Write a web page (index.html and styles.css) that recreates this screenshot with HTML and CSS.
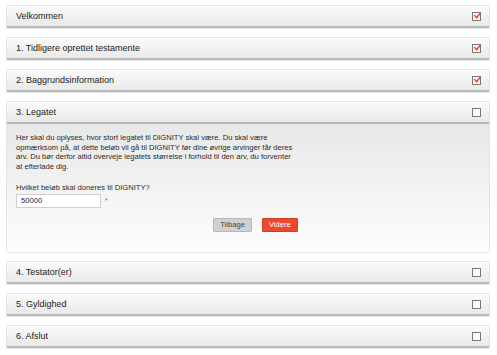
FILE: index.html
```html
<!DOCTYPE html>
<html lang="da">
<head>
<meta charset="utf-8">
<link rel="stylesheet" href="styles.css">
</head>
<body>
<div class="steps">
  <div class="panel">
    <div class="head"><span>Velkommen</span><span class="cb done"><svg viewBox="0 0 9 9"><path d="M1.5 3.5 L4 6.5 L8.5 0.8" /></svg></span></div>
  </div>
  <div class="panel">
    <div class="head"><span>1. Tidligere oprettet testamente</span><span class="cb done"><svg viewBox="0 0 9 9"><path d="M1.5 3.5 L4 6.5 L8.5 0.8" /></svg></span></div>
  </div>
  <div class="panel">
    <div class="head"><span>2. Baggrundsinformation</span><span class="cb done"><svg viewBox="0 0 9 9"><path d="M1.5 3.5 L4 6.5 L8.5 0.8" /></svg></span></div>
  </div>
  <div class="panel open">
    <div class="head"><span>3. Legatet</span><span class="cb"></span></div>
    <div class="body">
      <p class="intro">Her skal du oplyses, hvor stort legatet til DIGNITY skal være. Du skal være opmærksom på, at dette beløb vil gå til DIGNITY før dine øvrige arvinger får deres arv. Du bør derfor altid overveje legatets størrelse i forhold til den arv, du forventer at efterlade dig.</p>
      <label class="q">Hvilket beløb skal doneres til DIGNITY?</label>
      <div class="field"><input type="text" value="50000"><span class="req">*</span></div>
      <div class="actions"><button class="btn back">Tilbage</button><button class="btn next">Videre</button></div>
    </div>
  </div>
  <div class="panel">
    <div class="head"><span>4. Testator(er)</span><span class="cb"></span></div>
  </div>
  <div class="panel">
    <div class="head"><span>5. Gyldighed</span><span class="cb"></span></div>
  </div>
  <div class="panel">
    <div class="head"><span>6. Afslut</span><span class="cb"></span></div>
  </div>
</div>
</body>
</html>
```
FILE: styles.css
```css
html, body { margin: 0; padding: 0; background: #fff; }
body { font-family: "Liberation Sans", Arial, sans-serif; color: #333; }
.steps { padding: 5px 7px 0 6px; display: flex; flex-direction: column; gap: 8px; }
.panel { border: 1px solid #e4e4e4; border-radius: 2px; background: #fff; }
.head {
  height: 20px;
  display: flex; align-items: center; justify-content: space-between;
  padding: 0 8px 0 9px;
  font-size: 9px; color: #222;
  background: linear-gradient(#fbfbfb, #e9e9e9);
  border-bottom: 2px solid #b9b9b9;
}
.cb {
  width: 7px; height: 7px; border: 1px solid #777; background: #fafafa;
  position: relative; margin-top: 1px;
}
.cb svg { position: absolute; left: 0; top: -1px; width: 8px; height: 8px; overflow: visible; }
.cb svg path { fill: none; stroke: #e8412b; stroke-width: 1.6; }
.body {
  padding: 9px 9px 20px 9px;
  background: linear-gradient(#e8e8e8, #fdfdfd);
  font-size: 7.6px; color: #2a2a2a;
}
.intro { margin: 0 0 11px 0; line-height: 9.7px; max-width: 281px; }
.q { display: block; line-height: 10px; }
.field { display: flex; align-items: flex-start; gap: 4px; margin-top: 1px; }
.field input {
  height: 14px; padding: 0 4px; margin: 0; box-sizing: border-box; width: 85px;
  border: 1px solid #cfcfcf; background: #fff;
  font: 7.6px "Liberation Sans", Arial, sans-serif; color: #222;
}
.req { color: #e8412b; font-size: 7px; line-height: 7px; margin-top: 3px; }
.actions { display: flex; justify-content: center; gap: 10px; margin-top: 10px; padding-left: 15px; }
.btn {
  height: 14px; padding: 0 6px; font: 7.6px "Liberation Sans", Arial, sans-serif;
  border-radius: 1px; cursor: pointer;
}
.back { background: #d0d0d0; border: 1px solid #b8b8b8; color: #444; }
.next { background: #ec4a2b; border: 1px solid #d63a20; color: #fff; }
```
